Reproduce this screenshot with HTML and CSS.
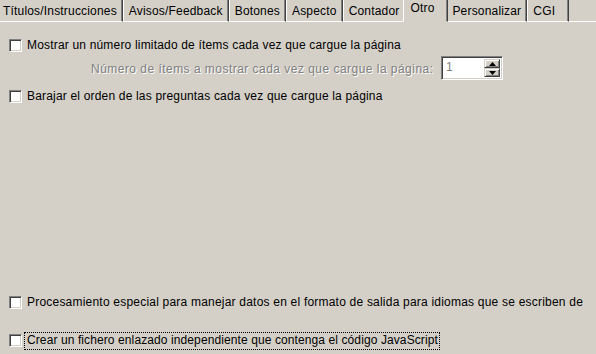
FILE: index.html
```html
<!DOCTYPE html>
<html lang="es">
<head>
<meta charset="utf-8">
<title>Otro</title>
<link rel="stylesheet" href="styles.css">
</head>
<body>
<div class="tabs">
  <div class="tab tab-first">Títulos/Instrucciones</div>
  <div class="tab">Avisos/Feedback</div>
  <div class="tab">Botones</div>
  <div class="tab">Aspecto</div>
  <div class="tab">Contador</div>
  <div class="tab tab-active">Otro</div>
  <div class="tab">Personalizar</div>
  <div class="tab">CGI</div>
  <div class="tab-fill"></div>
</div>
<div class="panel">
  <div class="row row-1">
    <span class="cb"></span>
    <span class="label">Mostrar un número limitado de ítems cada vez que cargue la página</span>
  </div>
  <div class="row row-sub">
    <span class="label disabled">Número de ítems a mostrar cada vez que cargue la página:</span>
    <div class="spin">
      <span class="spin-value">1</span>
      <div class="spin-buttons">
        <span class="spin-btn"><svg width="7" height="4" viewBox="0 0 7 4"><polygon points="3.5,0 7,4 0,4" fill="#000"/></svg></span>
        <span class="spin-btn"><svg width="7" height="4" viewBox="0 0 7 4"><polygon points="0,0 7,0 3.5,4" fill="#000"/></svg></span>
      </div>
    </div>
  </div>
  <div class="row row-3">
    <span class="cb"></span>
    <span class="label">Barajar el orden de las preguntas cada vez que cargue la página</span>
  </div>
  <div class="row row-4">
    <span class="cb"></span>
    <span class="label">Procesamiento especial para manejar datos en el formato de salida para idiomas que se escriben de</span>
  </div>
  <div class="row row-5">
    <span class="cb"></span>
    <span class="label focus">Crear un fichero enlazado independiente que contenga el código JavaScript</span>
  </div>
</div>
</body>
</html>
```

FILE: styles.css
```css
html, body {
  margin: 0;
  padding: 0;
}
body {
  width: 596px;
  height: 354px;
  overflow: hidden;
  background: #d4d0c8;
  font-family: "Liberation Sans", Arial, sans-serif;
  font-size: 12px;
  letter-spacing: 0.18px;
  color: #000;
}
.tabs {
  display: flex;
  align-items: flex-start;
  height: 22px;
}
.tab {
  box-sizing: border-box;
  min-width: 42px;
  height: 22px;
  padding: 3px 5px 0 5px;
  line-height: 17px;
  white-space: nowrap;
  border-left: 1px solid #fff;
  border-right: 1px solid #404040;
  border-bottom: 1px solid #fff;
  box-shadow: inset -1px 0 0 #808080;
}
.tab-first {
  margin-left: -3px;
}
.tab-active {
  position: relative;
  z-index: 1;
  min-width: 45px;
  margin: 0 -2px;
  padding: 0 5px 0 6px;
  border-bottom-color: #d4d0c8;
  background: #d4d0c8;
}
.tab-fill {
  flex: 1;
  height: 22px;
  box-sizing: border-box;
  border-bottom: 1px solid #fff;
}
.panel {
  display: flex;
  flex-direction: column;
}
.row {
  display: flex;
  align-items: center;
  height: 17px;
  white-space: nowrap;
}
.row-1 { margin-top: 15px; }
.row-sub {
  margin-top: 2px;
  height: 24px;
  padding-left: 91px;
  gap: 9px;
}
.row-3 { margin-top: 8px; }
.row-4 { margin-top: 189px; }
.row-5 { margin-top: 21px; }
.cb {
  flex: none;
  box-sizing: border-box;
  width: 13px;
  height: 13px;
  margin-left: 9px;
  margin-right: 5px;
  background: #fff;
  border: 1px solid;
  border-color: #808080 #fff #fff #808080;
  box-shadow: inset 1px 1px 0 #404040, inset -1px -1px 0 #d4d0c8;
}
.label {
  line-height: 15px;
}
.row-4 .label {
  letter-spacing: 0.21px;
}
.row-5 .label {
  letter-spacing: 0.1px;
}
.disabled {
  width: 341px;
  letter-spacing: 0.47px;
  color: #808080;
  text-shadow: 1px 1px 0 #fff;
  padding-top: 2px;
}
.focus {
  margin-left: -2px;
  padding: 0 1px 1px 2px;
  outline: 1px dotted #000;
}
.spin {
  flex: none;
  box-sizing: border-box;
  width: 62px;
  height: 24px;
  display: flex;
  align-items: stretch;
  background: #fff;
  border: 1px solid;
  border-color: #808080 #fff #fff #808080;
  box-shadow: inset 1px 1px 0 #404040, inset -1px -1px 0 #d4d0c8;
  padding: 2px;
}
.spin-value {
  flex: 1;
  color: #808080;
  padding-left: 2px;
  line-height: 17px;
}
.spin-buttons {
  display: flex;
  flex-direction: column;
  width: 16px;
}
.spin-btn {
  flex: 1;
  display: flex;
  align-items: center;
  justify-content: center;
  background: #d4d0c8;
  border-top: 1px solid #d4d0c8;
  border-left: 1px solid #d4d0c8;
  border-right: 1px solid #404040;
  border-bottom: 1px solid #404040;
  box-shadow: inset 1px 1px 0 #fff, inset -1px -1px 0 #808080;
}
```
